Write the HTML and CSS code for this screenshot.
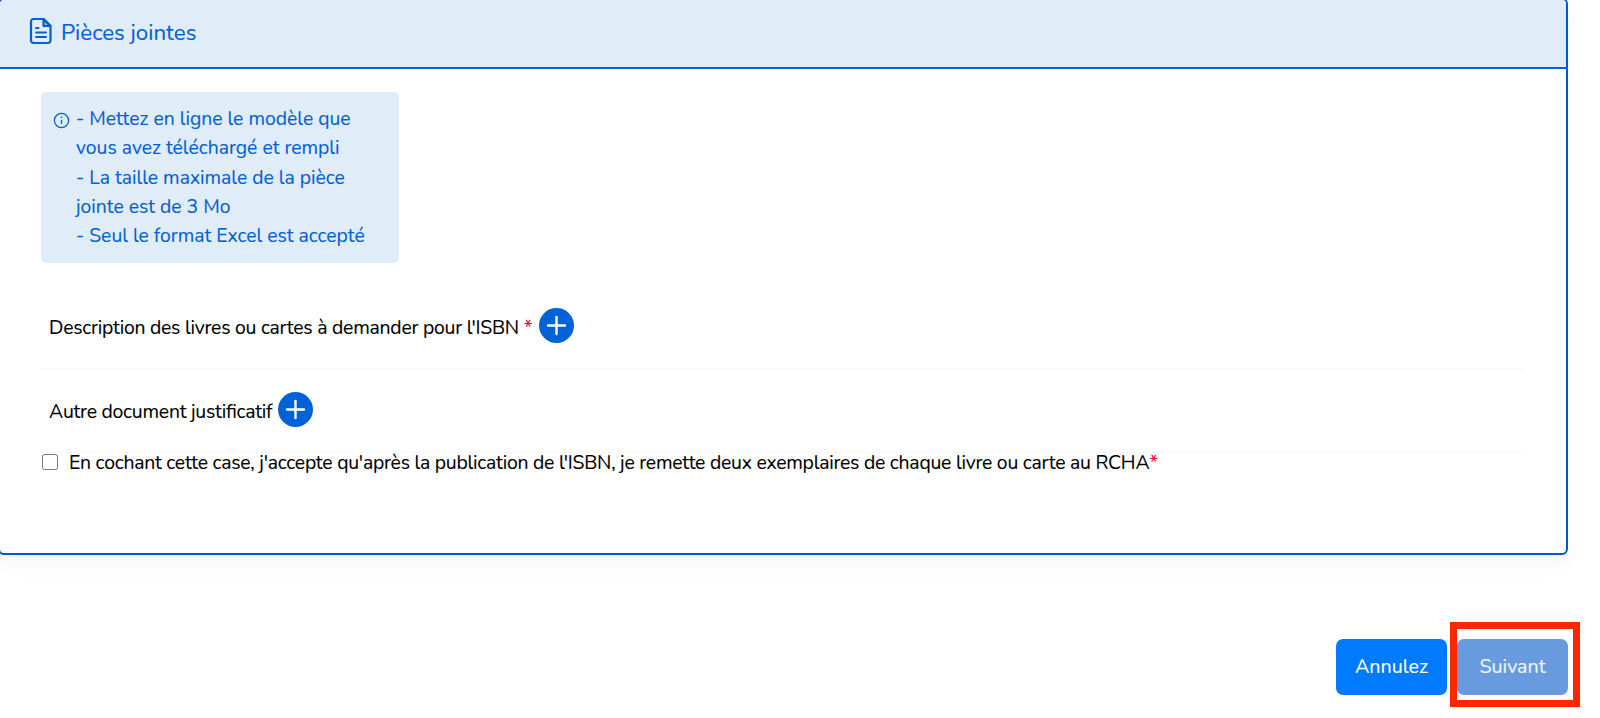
FILE: index.html
```html
<!DOCTYPE html>
<html lang="fr">
<head>
	<meta charset="utf-8">
	<title>Pièces jointes</title>
	<link rel="stylesheet" href="styles.css">
</head>
<body>
<div class="card">
	<div class="card-header">
		<svg class="file-icon" viewBox="0 0 24 28" fill="none" stroke="currentColor" stroke-width="2.200" stroke-linejoin="round" stroke-linecap="round">
			<path d="M4.500 2H14.500L21.500 9V23.500A2.500 2.500 0 0 1 19 26H4.500A2.500 2.500 0 0 1 2 23.500V4.500A2.500 2.500 0 0 1 4.500 2Z"/>
			<path d="M14.500 2V9H21.500Z" fill="currentColor" fill-opacity=".35"/>
			<path d="M7 11h2.500M7 15.500h10M7 20h10" stroke-width="2"/>
		</svg>
		<span class="title">Pièces jointes</span>
	</div>
	<div class="card-body">
		<div class="info">
			<svg class="info-icon" viewBox="0 0 16 16" fill="none" stroke="currentColor">
				<circle cx="8" cy="8" r="6.700" stroke-width="1.200"/>
				<path d="M8 7.200v4.200M8 4.300v1.300" stroke-width="1.300"/>
			</svg>
			<div class="info-text">
				<div>- Mettez en ligne le modèle que</div>
				<div>vous avez téléchargé et rempli</div>
				<div>- La taille maximale de la pièce</div>
				<div>jointe est de 3 Mo</div>
				<div>- Seul le format Excel est accepté</div>
			</div>
		</div>
		<div class="row">
			<label>Description des livres ou cartes à demander pour l'ISBN</label>
			<span class="req">*</span>
			<button class="add"><svg viewBox="0 0 35 35"><path d="M17.500 9v17M9 17.500h17"/></svg></button>
		</div>
		<div class="row">
			<label>Autre document justificatif</label>
			<button class="add"><svg viewBox="0 0 35 35"><path d="M17.500 9v17M9 17.500h17"/></svg></button>
		</div>
		<div class="check">
			<input type="checkbox" id="accept">
			<label for="accept">En cochant cette case, j'accepte qu'après la publication de l'ISBN, je remette deux exemplaires de chaque livre ou carte au RCHA</label><span class="req">*</span>
		</div>
	</div>
</div>
<div class="actions">
	<button class="btn cancel">Annulez</button>
	<div class="highlight"><button class="btn next">Suivant</button></div>
</div>
</body>
</html>
```

FILE: styles.css
```css
* {
	box-sizing: border-box;
}
body {
	margin: 0;
	height: 718px;
	overflow: hidden;
	background: #fff;
	color: #000;
	font: 20px/29.300px Nunito, Lato, sans-serif;
	-webkit-text-stroke: .1px;
}
button {
	border: 0;
	padding: 0;
	font: inherit;
}
label, .title, .info-text {
	white-space: nowrap;
}
label {
	font-size: 19.400px;
	letter-spacing: -.240px;
	font-feature-settings: "liga" 1;
}
.card {
	width: 1570px;
	height: 557px;
	margin: -2px 0 0 -2px;
	border: 2px solid #0057d0;
	border-radius: 6px;
	box-shadow: 0 10px 20px rgba(0,0,0,.04);
}
.card-header {
	display: flex;
	align-items: center;
	height: 69px;
	padding: 0 0 5px 29px;
	border-bottom: 2px solid #0062d6;
	border-radius: 4px 4px 0 0;
	background: #e0ecf8;
	color: #0060d4;
}
.file-icon {
	width: 24px;
	height: 28px;
	margin-right: 8px;
}
.title {
	font-size: 22.300px;
	padding-top: 4px;
}
.card-body {
	padding: 23px 42px 0 41px;
}
.info {
	display: flex;
	width: 358px;
	height: 171px;
	padding: 12px 0 0 12px;
	border-radius: 5px;
	background: #e0ecf8;
	color: #0060d4;
	font-size: 19.350px;
}
.info-icon {
	width: 17px;
	height: 17px;
	margin: 8px 6px 0 0;
}
.row {
	display: flex;
	align-items: center;
	height: 84px;
	padding: 0 0 3px 8px;
	border-bottom: 1px solid #f7f7f7;
}
.info + .row {
	height: 106px;
	padding-top: 22px;
}
.row .req {
	margin-left: 5px;
}
.row label, .row .req {
	padding-top: 5px;
}
.req {
	color: #ff0038;
}
.add {
	width: 35px;
	height: 35px;
	margin-left: 6px;
	border-radius: 50%;
	background: #0062d6;
}
.add svg {
	display: block;
	fill: none;
	stroke: #fff;
	stroke-width: 2.400;
	stroke-linecap: round;
}
.check {
	display: flex;
	height: 20px;
	align-items: center;
}
.check input {
	width: 16px;
	height: 16px;
	margin: 0 11px 2px 1px;
}
.actions {
	display: flex;
	justify-content: flex-end;
	align-items: flex-start;
	padding: 67px 20px 0 0;
}
.btn {
	width: 111px;
	height: 56px;
	border-radius: 7px;
	background: #007bff;
	color: #fff;
	font-size: 19.700px;
}
.cancel {
	margin: 17px 3px 0 0;
}
.highlight {
	width: 130px;
	height: 85px;
	padding-top: 10px;
	border: 7px solid #ff2600;
}
.next {
	background: #689ae0;
	color: #f3f7fd;
}
```
